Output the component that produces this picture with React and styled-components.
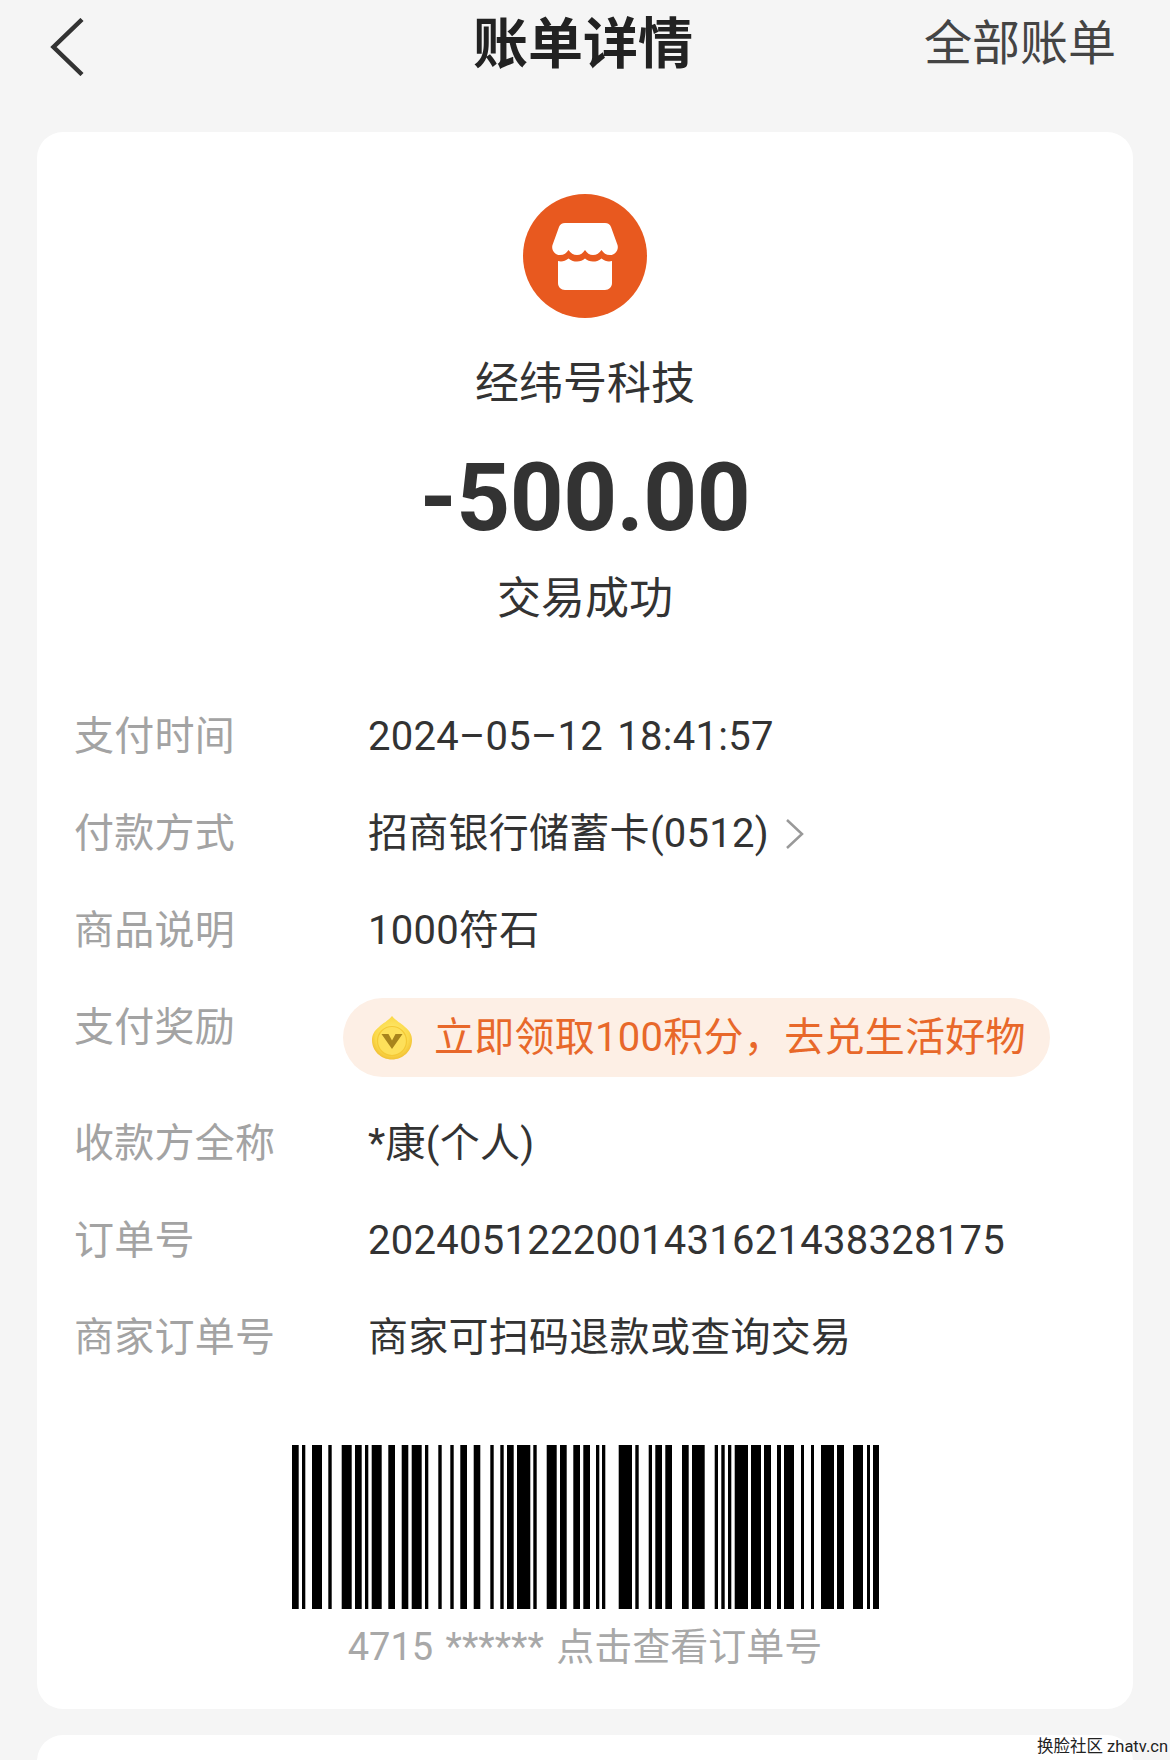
import React from "react";
import styled, { createGlobalStyle } from "styled-components";

const BARS = [
  [291, 297.7], [301, 304.3], [311, 321], [327.3, 330.7], [340.7, 350.7], [354, 360.7],
  [364, 367.3], [370.7, 380.7], [387.3, 394], [400.7, 407.3], [410.7, 420.7], [424, 427.3],
  [437.3, 440.7], [449.3, 452.7], [459.3, 466], [472.7, 479.3], [489.3, 492.7], [499.3, 502.7],
  [506, 512.7], [516, 529.3], [532.3, 535.7], [545.7, 555.7], [559, 565.7], [572.3, 579],
  [582.3, 589], [595, 598.3], [601, 604.3], [617.7, 631], [634.3, 637.7], [647.7, 651],
  [654.3, 661], [664.3, 671], [681, 687.7], [691, 703.7], [713.7, 717], [720.3, 723.7],
  [727, 730.3], [733.7, 747], [750, 760], [763, 770], [776, 780], [783, 793], [800, 803],
  [810, 813], [820, 833], [836, 843], [852, 862], [866, 869], [872, 878],
];

const ROWS = [
  { label: "支付时间", value: "2024–05–12 18:41:57" },
  { label: "付款方式", value: "招商银行储蓄卡(0512)", arrow: true },
  { label: "商品说明", value: "1000符石" },
  { label: "支付奖励", reward: "立即领取100积分，去兑生活好物" },
  { label: "收款方全称", value: "*康(个人)" },
  { label: "订单号", value: "2024051222001431621438328175" },
  { label: "商家订单号", value: "商家可扫码退款或查询交易" },
];

const StoreIcon = () => (
  <svg width="66" height="67" viewBox="0 0 66 67" fill="#fff">
    <path d="M13 0H53C56 0 58 1.500 59 4L65.500 22C67 27 63 32 58 32C54 32 51.500 30 49.500 27C47.500 30 44.500 32 41 32C37.500 32 35 30 33 27C31 30 28.500 32 25 32C21.500 32 18.500 30 16.500 27C14.500 30 12 32 8 32C3 32 -1 27 .5 22L7 4C8 1.500 10 0 13 0Z" />
    <path d="M6 38C9 39 13 38.500 16.500 35.500C19.500 38 22 38.500 25 38.500C28 38.500 31 37.500 33 35.500C35 37.500 38 38.500 41 38.500C44 38.500 46.500 38 49.500 35.500C53 38.500 57 39 60 38V60C60 64 57 67 53 67H13C9 67 6 64 6 60Z" />
  </svg>
);

const CoinIcon = () => (
  <svg width="40" height="44" viewBox="0 0 40 44">
    <defs>
      <radialGradient id="coinFill" cx="50%" cy="45%" r="60%">
        <stop offset="0%" stopColor="#fff07a" />
        <stop offset="70%" stopColor="#fbd94a" />
        <stop offset="100%" stopColor="#eeb82e" />
      </radialGradient>
    </defs>
    <path d="M20 0C24 5 29 7 33 11C38 15 40 19 40 24C40 35 31 43.500 20 43.500C9 43.500 0 35 0 24C0 19 2 15 7 11C11 7 16 5 20 0Z" fill="url(#coinFill)" />
    <circle cx="20" cy="25" r="14.500" fill="#fde05a" stroke="#f4c936" strokeWidth="1.200" />
    <path d="M9.500 18H16.500L20 24.500L23.500 18H30.500L20 33Z" fill="#a8841c" />
  </svg>
);

const App = () => {
  return (
    <Page>
      <GlobalStyle />
      <Header>
        <BackButton>
          <svg width="34" height="58" viewBox="0 0 34 58" fill="none">
            <path d="M32 1.500L3.500 29L32 56.500" stroke="#333" strokeWidth="4.500" />
          </svg>
        </BackButton>
        <Title>账单详情</Title>
        <AllBills>全部账单</AllBills>
      </Header>
      <Card>
        <Summary>
          <Logo>
            <StoreIcon />
          </Logo>
          <Merchant>经纬号科技</Merchant>
          <Amount>-500.00</Amount>
          <Status>交易成功</Status>
        </Summary>
        <Rows>
          {ROWS.map((row) => (
            <Row key={row.label} $reward={!!row.reward}>
              <Label>{row.label}</Label>
              {row.reward ? (
                <RewardPill>
                  <CoinIcon />
                  <span>{row.reward}</span>
                </RewardPill>
              ) : (
                <Value>
                  {row.value}
                  {row.arrow && (
                    <svg width="20" height="32" viewBox="0 0 20 32" fill="none">
                      <path d="M2 2L17 16L2 30" stroke="#999" strokeWidth="2.500" />
                    </svg>
                  )}
                </Value>
              )}
            </Row>
          ))}
        </Rows>
        <BarcodeBlock>
          <svg width="587" height="164" viewBox="291 0 587 164">
            {BARS.map(([start, end]) => (
              <rect key={start} x={start} y="0" width={end - start} height="164" fill="#000" />
            ))}
          </svg>
          <BarcodeText>4715 ****** 点击查看订单号</BarcodeText>
        </BarcodeBlock>
      </Card>
      <NextCard />
      <Watermark>换脸社区 zhatv.cn</Watermark>
    </Page>
  );
};

export default App;

const FONT = `Roboto, "Noto Sans CJK SC", sans-serif`;

const GlobalStyle = createGlobalStyle`
  html, body {
    margin: 0;
    padding: 0;
    background: #f5f5f5;
  }
`;

const Page = styled.div`
  position: relative;
  width: 1170px;
  height: 1760px;
  overflow: hidden;
  background: #f5f5f5;
  font-family: ${FONT};
  color: #333333;
`;

const Header = styled.div`
  display: grid;
  grid-template-columns: 1fr auto 1fr;
  align-items: start;
  height: 94px;
  padding: 0 54px 0 50px;
  margin-bottom: 38px;
`;

const BackButton = styled.div`
  display: flex;
  margin-top: 18px;
`;

const Title = styled.h1`
  margin: 0;
  font-size: 55px;
  line-height: 88px;
  font-weight: 700;
  color: #222222;
`;

const AllBills = styled.div`
  justify-self: end;
  font-size: 48px;
  line-height: 88px;
  font-weight: 400;
  color: #444444;
`;

const Card = styled.div`
  width: 1096px;
  height: 1577px;
  margin: 0 37px;
  box-sizing: border-box;
  padding-top: 62px;
  background: #ffffff;
  border-radius: 26px;
`;

const Summary = styled.div`
  display: flex;
  flex-direction: column;
  align-items: center;
`;

const Logo = styled.div`
  display: flex;
  align-items: center;
  justify-content: center;
  width: 124px;
  height: 124px;
  border-radius: 50%;
  background: #e8591f;
`;

const Merchant = styled.div`
  margin-top: 36px;
  font-size: 44px;
  line-height: 60px;
`;

const Amount = styled.div`
  margin-top: 29px;
  font-size: 94px;
  line-height: 110px;
  font-weight: 700;
  letter-spacing: -0.5px;
  color: #333333;
`;

const Status = styled.div`
  margin-top: 16px;
  font-size: 44px;
  line-height: 60px;
`;

const Rows = styled.div`
  display: flex;
  flex-direction: column;
  margin-top: 59px;
  padding-left: 37px;
`;

const Row = styled.div`
  display: grid;
  grid-template-columns: 294px 1fr;
  align-items: start;
  height: ${(p) => (p.$reward ? "116px" : "97px")};
  font-size: 40px;
  line-height: 97px;
  letter-spacing: 0.27px;
`;

const Label = styled.div`
  color: #a3a3a3;
`;

const Value = styled.div`
  display: flex;
  align-items: center;
  gap: 16px;
  word-spacing: 4px;
  color: #333333;
`;

const RewardPill = styled.div`
  display: flex;
  align-items: center;
  gap: 22px;
  width: 707px;
  height: 79px;
  margin: 19px 0 0 -25px;
  padding-left: 29px;
  box-sizing: border-box;
  border-radius: 40px;
  background: #fdefe5;
  color: #e8682a;
  line-height: 79px;
  white-space: nowrap;
`;

const BarcodeBlock = styled.div`
  display: flex;
  flex-direction: column;
  align-items: center;
  margin-top: 59px;
  svg {
    display: block;
  }
`;

const BarcodeText = styled.div`
  margin-top: 12px;
  font-size: 38px;
  line-height: 52px;
  word-spacing: 3px;
  color: #a8a8a8;
`;

const NextCard = styled.div`
  width: 1096px;
  height: 60px;
  margin: 26px 37px 0;
  background: #ffffff;
  border-radius: 26px 26px 0 0;
`;

const Watermark = styled.div`
  position: absolute;
  right: 2px;
  bottom: 2px;
  font-size: 16.500px;
  line-height: 22px;
  color: #222222;
  text-shadow: 0 0 2px #ffffff;
`;
